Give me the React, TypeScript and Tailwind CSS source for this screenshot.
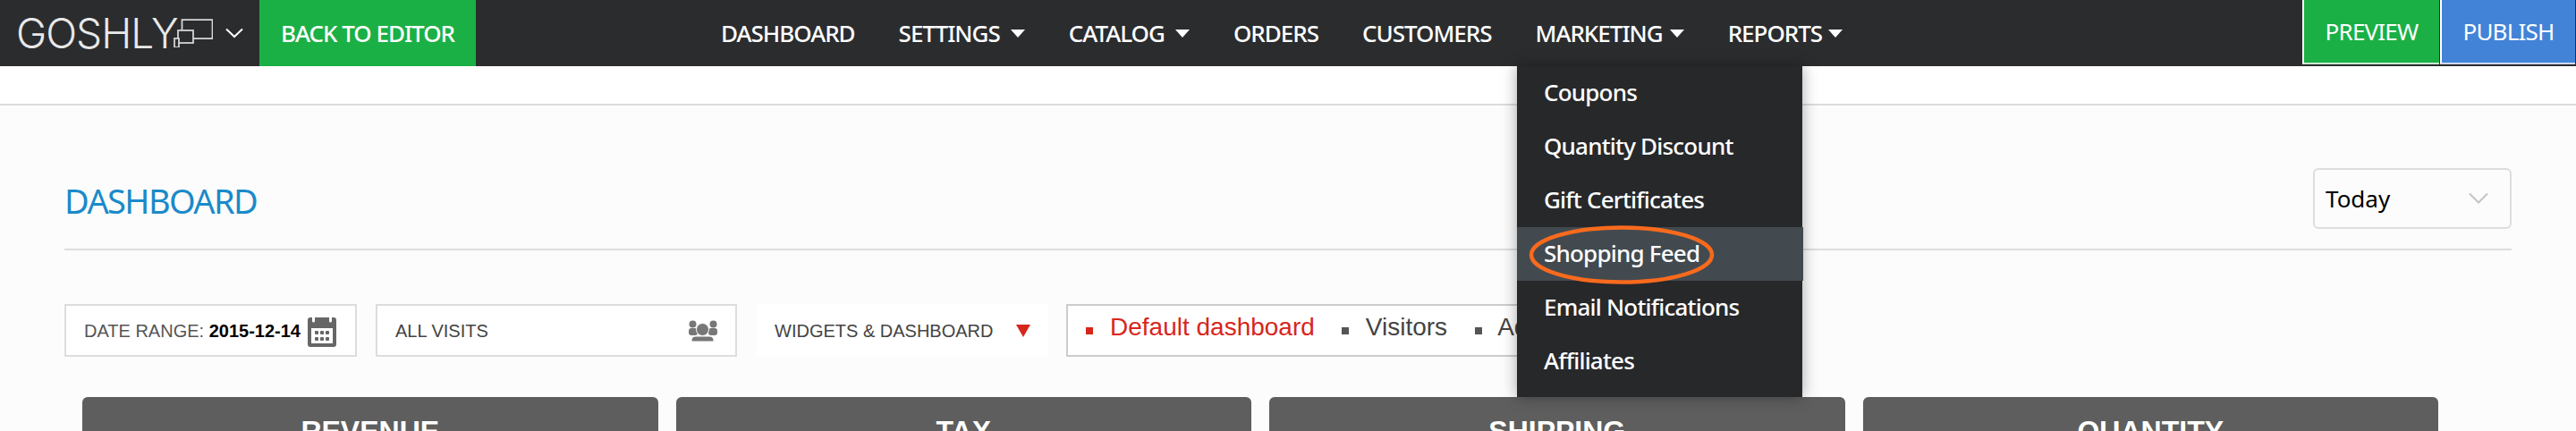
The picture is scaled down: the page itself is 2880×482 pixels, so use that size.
const navItems = [
  { label: "DASHBOARD" },
  { label: "SETTINGS", caret: "ml-3" },
  { label: "CATALOG", caret: "ml-3" },
  { label: "ORDERS" },
  { label: "CUSTOMERS" },
  { label: "MARKETING", caret: "ml-2" },
  { label: "REPORTS", caret: "ml-[7px]" },
];

const menuItems = [
  "Coupons",
  "Quantity Discount",
  "Gift Certificates",
  "Shopping Feed",
  "Email Notifications",
  "Affiliates",
];

const cards = ["REVENUE", "TAX", "SHIPPING", "QUANTITY"];

function Logo() {
  return (
    <div className="flex w-[290px] shrink-0 items-center pl-[18px]">
      <span className="w-[176px] text-[46px] leading-none font-light tracking-[-1px] text-[#e8e8e8] font-['Inter',sans-serif]">
        GOSHLY
      </span>
      <svg width="44" height="32" viewBox="0 0 44 32" fill="none" stroke="#d8d8d8" strokeWidth="1.75" className="mt-[-1px] shrink-0">
        <path d="M9.5 12.5V1h34v21H22" />
        <rect x="5" y="13" width="17" height="14" />
        <rect x="1" y="22" width="5" height="10" fill="#2b2c2e" />
      </svg>
      <svg width="20" height="12" viewBox="0 0 20 12" fill="none" stroke="#fff" strokeWidth="2" className="mt-[-1px] ml-[14px]">
        <path d="M1 1.5l9 8.5 9-8.5" />
      </svg>
    </div>
  );
}

function CalendarIcon() {
  return (
    <svg width="32" height="33" viewBox="0 0 32 33" fill="#666" className="mt-[4px]">
      <path d="M3 0h2v4a1.5 1.5 0 0 0 3 0V0h16v4a1.5 1.5 0 0 0 3 0V0h2a3 3 0 0 1 3 3v27a3 3 0 0 1-3 3H3a3 3 0 0 1-3-3V3a3 3 0 0 1 3-3z" />
      <rect x="4" y="12" width="24" height="17" fill="#fff" />
      {[8, 14, 20].map((x) => (
        <g key={x}>
          <rect x={x} y="15" width="4" height="4" rx="1" />
          <rect x={x} y="22" width="4" height="4" rx="1" />
        </g>
      ))}
    </svg>
  );
}

function PeopleIcon() {
  return (
    <svg width="32" height="24" viewBox="0 0 32 24" fill="#777">
      <circle cx="4.5" cy="4.5" r="4" />
      <circle cx="27.5" cy="4.5" r="4" />
      <rect x="0" y="9" width="10" height="8" rx="3" />
      <rect x="22" y="9" width="10" height="8" rx="3" />
      <circle cx="15.5" cy="10.5" r="7" stroke="#fff" strokeWidth="1" />
      <path d="M3 24v-2a5 5 0 0 1 5-4h15a5 5 0 0 1 5 4v2z" stroke="#fff" strokeWidth="1" />
    </svg>
  );
}

export default function App() {
  return (
    <div className="relative h-[482px] overflow-hidden bg-[#fcfcfc] font-['Liberation_Sans',sans-serif]">
      {/* Top nav */}
      <header className="flex h-[74px] bg-[#2b2c2e] font-['Noto_Sans',sans-serif] text-[26px] text-white">
        <Logo />
        <a className="flex h-full w-[242px] shrink-0 items-center justify-center bg-[#1bb045] font-medium tracking-[-1px]">
          BACK TO EDITOR
        </a>
        <nav className="ml-[274px] flex items-center gap-[49px]">
          {navItems.map((item) => (
            <a key={item.label} className="flex items-center font-medium tracking-[-1px] whitespace-nowrap">
              {item.label}
              {item.caret && (
                <span className={`${item.caret} h-0 w-0 border-x-[8px] border-t-[9px] border-x-transparent border-t-white`} />
              )}
            </a>
          ))}
        </nav>
        <div className="ml-auto flex h-[72px]">
          <a className="flex w-[153px] items-center justify-center border-b-2 border-l-2 border-b-[#c8e8d0] border-l-white bg-[#1bb045] tracking-[-0.8px]">
            PREVIEW
          </a>
          <a className="mr-px ml-px flex w-[151px] items-center justify-center border-b-2 border-l-2 border-b-[#cdd9ee] border-l-white bg-[#4283d8] tracking-[-0.8px]">
            PUBLISH
          </a>
        </div>
      </header>

      {/* White strip above the page body */}
      <div className="h-[44px] border-b-2 border-[#dcdcdc] bg-white" />

      <main className="px-[72px]">
        <div className="flex h-[162px] items-end justify-between border-b-2 border-[#dcdcdc]">
          <h1 className="mb-[28px] text-[38px] leading-[52px] tracking-[-1.6px] text-[#1a8ac9] font-['Noto_Sans',sans-serif]">DASHBOARD</h1>
          <div className="mb-[22px] flex h-[68px] w-[222px] items-center justify-between rounded-md border-2 border-[#dddddd] pr-[24px] pl-[12px] text-[26px] text-black font-['Noto_Sans',sans-serif]">
            Today
            <svg width="22" height="14" viewBox="0 0 22 14" fill="none" stroke="#c4c4c4" strokeWidth="2">
              <path d="M1 1.5l10 10 10-10" />
            </svg>
          </div>
        </div>

        <div className="mt-[60px] flex h-[59px] text-[#555]">
          <div className="flex w-[327px] items-center border-2 border-[#dddddd] bg-white pl-[20px] text-[20px]">
            DATE RANGE:&nbsp;<b className="text-black">2015-12-14</b>
            <span className="ml-[8px]"><CalendarIcon /></span>
          </div>
          <div className="ml-[21px] flex w-[404px] items-center justify-between border-2 border-[#dddddd] bg-white px-[20px] text-[20px] text-[#444]">
            ALL VISITS
            <PeopleIcon />
          </div>
          <div className="ml-[22px] flex w-[326px] items-center justify-between bg-white px-[20px] text-[20px] text-[#444]">
            WIDGETS &amp; DASHBOARD
            <span className="h-0 w-0 border-x-[8px] border-t-[14px] border-x-transparent border-t-[#d7261c]" />
          </div>
          <div className="ml-[20px] flex w-[620px] items-center overflow-hidden border-2 border-[#cccccc] bg-white pl-[20px] text-[28px] whitespace-nowrap text-[#444]">
            <span className="h-2 w-2 shrink-0 bg-[#d7261c]" />
            <span className="-mt-[8px] ml-[19px] text-[#d7261c]">Default dashboard</span>
            <span className="ml-[30px] h-2 w-2 shrink-0 bg-[#555]" />
            <span className="-mt-[8px] ml-[19px]">Visitors</span>
            <span className="ml-[31px] h-2 w-2 shrink-0 bg-[#555]" />
            <span className="-mt-[8px] ml-[17px]">Advanced</span>
          </div>
        </div>

        <div className="mt-[45px] ml-[20px] flex gap-[20px]">
          {cards.map((card) => (
            <div key={card} className="h-[200px] w-[643.5px] shrink-0 rounded-md bg-[#5e5e5e] pt-[22px] text-center text-[32px] leading-none font-bold text-white">
              {card}
            </div>
          ))}
        </div>
      </main>

      {/* Marketing dropdown */}
      <ul className="absolute top-[74px] left-[1696px] h-[370px] w-[319px] bg-[#27282a] font-['Noto_Sans',sans-serif] text-[26px] font-medium tracking-[-0.8px] text-white shadow-[0_0_16px_rgba(0,0,0,0.35)]">
        {menuItems.map((item) => (
          <li
            key={item}
            className={
              item === "Shopping Feed"
                ? "relative -mr-px flex h-[60px] items-center bg-[#424a50] pb-[2px] pl-[30px]"
                : "flex h-[60px] items-center pb-[2px] pl-[30px]"
            }
          >
            {item}
            {item === "Shopping Feed" && (
              <svg width="208" height="66" viewBox="0 0 208 66" fill="none" className="absolute -top-[2px] left-[13px]">
                <ellipse cx="104" cy="33" rx="101" ry="30.5" stroke="#f96a1d" strokeWidth="4.5" />
              </svg>
            )}
          </li>
        ))}
      </ul>
    </div>
  );
}
